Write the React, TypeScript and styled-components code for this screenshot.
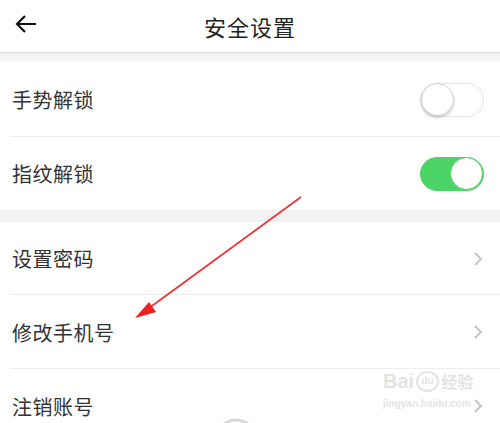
import React from 'react';
import styled, { createGlobalStyle } from 'styled-components';

const GlobalStyle = createGlobalStyle`
  html, body {
    margin: 0;
    padding: 0;
    background: #fff;
    overflow: hidden;
  }
  body {
    font-family: "Noto Sans CJK SC", "Noto Sans", sans-serif;
  }
`;

const Page = styled.div`
  position: relative;
  width: 500px;
  height: 423px;
  overflow: hidden;
  background: #fff;
`;

const Header = styled.div`
  height: 52px;
  display: flex;
  align-items: center;
  justify-content: center;
  position: relative;
  border-bottom: 1px solid #dcdcdc;
`;

const BackButton = styled.div`
  position: absolute;
  left: 14px;
  top: 12px;
  width: 24px;
  height: 24px;
  display: flex;
  align-items: center;
`;

const Title = styled.h1`
  margin: 0;
  font-size: 22px;
  font-weight: 400;
  color: #222;
  letter-spacing: 1px;
`;

const Shade = styled.div`
  height: 9px;
  background: linear-gradient(#ececec, #f9f9f9);
`;

const Section = styled.div`
  background: #fff;
`;

const Gap = styled.div`
  height: 12px;
  background: #f2f2f2;
`;

const Row = styled.div<{ $h: number; $last?: boolean }>`
  height: ${p => p.$h}px;
  display: flex;
  align-items: center;
  justify-content: space-between;
  padding: 0 17px 0 12px;
  position: relative;
  &::after {
    content: '';
    display: ${p => (p.$last ? 'none' : 'block')};
    position: absolute;
    left: 10px;
    right: 0;
    bottom: 0;
    height: 1px;
    background: #ededed;
  }
`;

const Label = styled.span`
  font-size: 20px;
  color: #333;
  letter-spacing: 0.5px;
`;

const Switch = styled.div<{ $on: boolean }>`
  width: 64px;
  height: 34px;
  border-radius: 17px;
  box-sizing: border-box;
  border: 1.5px solid ${p => (p.$on ? '#4cd466' : '#e6e6e6')};
  background: ${p => (p.$on ? '#4cd466' : '#fff')};
  margin-right: -1px;
  display: flex;
  align-items: center;
  justify-content: ${p => (p.$on ? 'flex-end' : 'flex-start')};
`;

const Knob = styled.div<{ $on: boolean }>`
  width: 33px;
  height: 33px;
  border-radius: 50%;
  background: #fff;
  box-sizing: border-box;
  border: 1px solid ${p => (p.$on ? '#4cd466' : '#d0d0d0')};
  box-shadow: ${p => (p.$on ? 'none' : '0 2px 3px rgba(0,0,0,0.18)')};
`;

const Overlay = styled.svg`
  position: absolute;
  left: 0;
  top: 0;
  pointer-events: none;
`;

const Watermark = styled.div`
  position: absolute;
  left: 383px;
  top: 370px;
  color: rgba(200, 200, 200, 0.5);
  font-family: "Liberation Sans", Arial, sans-serif;
  display: flex;
  flex-direction: column;
  align-items: flex-start;
`;

const MarkTop = styled.div`
  display: flex;
  align-items: center;
  font-size: 20px;
  font-weight: 700;
  line-height: 22px;
`;

const MarkDu = styled.span`
  display: inline-flex;
  align-items: center;
  justify-content: center;
  width: 19px;
  height: 17px;
  border-radius: 50%;
  border: 2px solid rgba(200, 200, 200, 0.5);
  font-size: 10px;
  margin: 0 2px;
`;

const MarkCn = styled.span`
  font-family: "Noto Sans CJK SC", sans-serif;
  font-size: 16px;
  font-weight: 700;
`;

const MarkUrl = styled.div`
  font-size: 10px;
  font-weight: 700;
  margin-top: 6px;
`;

const Chevron = () => (
  <svg width="10" height="16" viewBox="0 0 10 16">
    <path d="M2 2 L8 8 L2 14" fill="none" stroke="#c4c4c4" strokeWidth="2" />
  </svg>
);

const App = () => {
  return (
    <Page>
      <GlobalStyle />
      <Header>
        <BackButton>
          <svg width="24" height="20" viewBox="0 0 24 20">
            <path d="M22 10 H3 M11 2 L3 10 L11 18" fill="none" stroke="#111" strokeWidth="2.2" />
          </svg>
        </BackButton>
        <Title>安全设置</Title>
      </Header>
      <Shade />
      <Section>
        <Row $h={75}>
          <Label>手势解锁</Label>
          <Switch $on={false}><Knob $on={false} /></Switch>
        </Row>
        <Row $h={73} $last>
          <Label>指纹解锁</Label>
          <Switch $on><Knob $on /></Switch>
        </Row>
      </Section>
      <Gap />
      <Section>
        <Row $h={73}>
          <Label>设置密码</Label>
          <Chevron />
        </Row>
        <Row $h={74}>
          <Label>修改手机号</Label>
          <Chevron />
        </Row>
        <Row $h={74} $last>
          <Label>注销账号</Label>
          <Chevron />
        </Row>
      </Section>

      <Watermark>
        <MarkTop>
          Bai<MarkDu>du</MarkDu><MarkCn>经验</MarkCn>
        </MarkTop>
        <MarkUrl>jingyan.baidu.com</MarkUrl>
      </Watermark>

      <Overlay width="500" height="423" viewBox="0 0 500 423">
        <circle cx="236" cy="440" r="20" fill="none" stroke="#d8d8d8" strokeWidth="3" />
        <line x1="301" y1="197" x2="145" y2="311" stroke="#f03030" strokeWidth="1.6" />
        <polygon points="135,318 149,302 156,312" fill="#f02020" />
      </Overlay>
    </Page>
  );
};

export default App;
